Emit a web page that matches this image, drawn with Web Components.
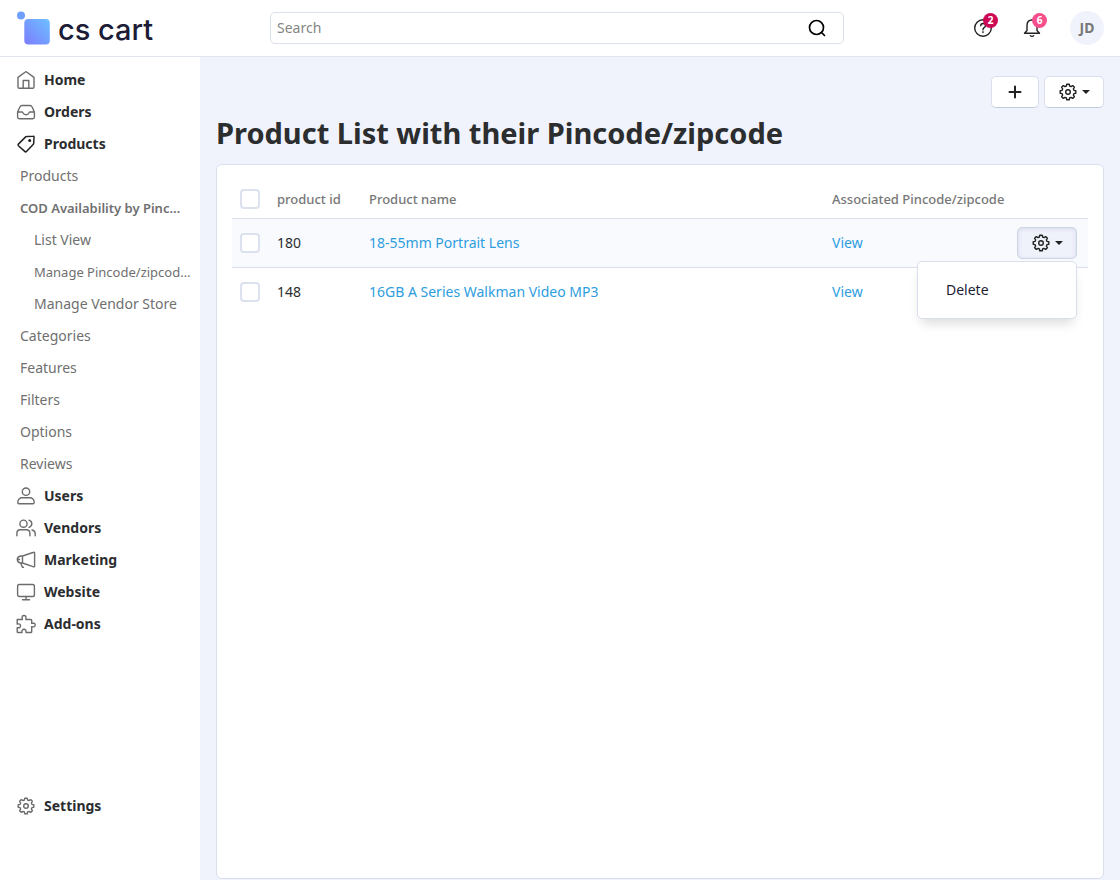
<!DOCTYPE html>
<html lang="en">
<head>
  <meta charset="utf-8">
  <meta name="viewport" content="width=device-width, initial-scale=1">
  <title>Product List with their Pincode/zipcode</title>
  <style>
    body {
      margin: 0;
      font-family: "Noto Sans", "Open Sans", sans-serif;
      font-size: 14px;
      line-height: 20px;
      color: #2b2d2f;
      --line: #d9dfec;
      --muted: #6f6f6f;
      --page: #f0f3fc;
      --link: #2d9de0;
    }
  </style>
</head>
<body>
  <admin-page>
    <admin-header slot="header" initials="JD">
      <counter-button icon="help" count="2" label="Help center" style="--badge: #cc0a54"></counter-button>
      <counter-button icon="bell" count="6" label="Notifications" style="--badge: #f6508c"></counter-button>
    </admin-header>
    <side-nav slot="nav">
      <nav-item icon="home">Home</nav-item>
      <nav-item icon="orders">Orders</nav-item>
      <nav-item icon="tag" active>Products</nav-item>
      <nav-item level="1">Products</nav-item>
      <nav-item level="1" active long>COD Availability by Pinc…</nav-item>
      <nav-item level="2">List View</nav-item>
      <nav-item level="2" long>Manage Pincode/zipcod…</nav-item>
      <nav-item level="2">Manage Vendor Store</nav-item>
      <nav-item level="1">Categories</nav-item>
      <nav-item level="1">Features</nav-item>
      <nav-item level="1">Filters</nav-item>
      <nav-item level="1">Options</nav-item>
      <nav-item level="1">Reviews</nav-item>
      <nav-item icon="user">Users</nav-item>
      <nav-item icon="users">Vendors</nav-item>
      <nav-item icon="megaphone">Marketing</nav-item>
      <nav-item icon="monitor">Website</nav-item>
      <nav-item icon="puzzle">Add-ons</nav-item>
      <nav-item slot="bottom" icon="gear">Settings</nav-item>
    </side-nav>
    <tool-button slot="actions" icon="plus" label="Add"></tool-button>
    <tool-button slot="actions" icon="gear" label="Tools" caret></tool-button>
    <span slot="title">Product List with their Pincode/zipcode</span>
    <product-table></product-table>
  </admin-page>

  <script>
    // outline of an eight-toothed cog centred in a 20x20 box
    function cogPath() {
      const points = [];
      for (let i = 0; i < 8; i++) {
        [[-15, 6.2], [-9, 7.9], [9, 7.9], [15, 6.2]].forEach(([offset, r]) => {
          const a = (i * 45 + offset) * Math.PI / 180;
          points.push((10 + r * Math.sin(a)).toFixed(2) + ' ' + (10 - r * Math.cos(a)).toFixed(2));
        });
      }
      return 'M' + points.join('L') + 'Z';
    }

    const ICONS = {
      home: '<path d="M2 7.4 9 2.200q1-.8 2 0l7 5.200V17q0 1.300-1.300 1.300H3.300Q2 18.300 2 17zM7.200 18.300V10.500h5.600v7.800"/>',
      orders: '<path d="M1.600 10 4 4.700Q4.500 3.500 6 3.500h8q1.500 0 2 1.200l2.400 5.300v5q0 1.700-1.700 1.700H3.300Q1.600 16.700 1.600 15zM1.600 10H6q.6 0 .9.700.8 2 3.100 2t3.100-2q.3-.7.9-.7h4.400"/>',
      tag: '<path d="M10.500 2.600 17 2.200q1-.1 1 1l-.3 6q0 .7-.6 1.200l-6.600 7q-.9.900-1.800 0L2.400 11.700q-.8-.8 0-1.600l7-7q.5-.5 1.100-.5z"/><circle cx="13.700" cy="6.500" r=".8" fill="currentColor"/>',
      user: '<circle cx="10" cy="5.700" r="3.700"/><path d="M5.200 11.700h9.600l2.300 1.500q1 .8 1 2.400v1.200q0 1-1 1H2.900q-1 0-1-1v-1.200q0-1.600 1-2.400z"/>',
      users: '<circle cx="7.500" cy="5.700" r="3.600"/><path d="M.9 17.700v-2.500q0-3.500 3.500-3.500h6q3.500 0 3.500 3.500v2.500M13 2.200q2.800 1 2.800 3.500T13 9.300M16 12q3.200.8 3.200 3.500v2.200"/>',
      megaphone: '<path d="M6.500 6 17 2.500q1.600-.6 1.600.6v13q0 1.200-1.600.6L6.500 13H4.600Q1.300 12.400 1.300 9.500T4.600 6zM6.500 6v7M4.600 13l1.600 3.700q.4 1 1.300.6M1.500 9.500h2"/>',
      monitor: '<rect x="1.600" y="2.500" width="16.800" height="12" rx="1.800"/><path d="M10 14.500v3.300M6.500 17.800h7"/>',
      puzzle: '<path d="M1.200 5.500h5.200Q5.300 1.500 8 1.500t1.800 4h5q.9 0 .9.900v3q3.500-.7 3.500 1.600t-3.500 1.700v5q0 .8-.8.800H10q.4-3.300-2-3.300t-2 3.300H2q-.8 0-.8-.8v-4q3.300.6 3.300-1.900T1.200 10z"/>',
      gear: '<path d="' + cogPath() + '"/><circle cx="10" cy="10" r="2.300"/>',
      help: '<circle cx="10" cy="10" r="8.300"/><path d="M7.700 7.800q0-2.300 2.400-2.300t2.300 2.200q0 1.200-1.300 2T10 11.800M10 13.800v.8"/>',
      bell: '<path d="M10 2q5 0 5 5.700v4.800l2.500 2.800h-15L5 12.500V7.700Q5 2 10 2zM8.300 17.800q1.700 1.200 3.400 0"/>',
      search: '<circle cx="9.500" cy="9.500" r="7"/><path d="m14.500 14.500 3 3"/>',
      plus: '<path d="M10 4.500v11M4.500 10h11"/>'
    };

    class UiIcon extends HTMLElement {
      connectedCallback() {
        if (this.shadowRoot) return;
        this.attachShadow({ mode: 'open' }).innerHTML = `
        <style>
          :host {
            display: block;
            flex: none;
            width: 20px;
            height: 20px;
          }
          svg {
            display: block;
            width: 100%;
            height: 100%;
            fill: none;
            stroke: currentColor;
            stroke-width: var(--stroke, 1.4);
            stroke-linejoin: round;
            stroke-linecap: round;
          }
        </style>
        <svg viewBox="0 0 20 20" aria-hidden="true">${ICONS[this.getAttribute('name')]}</svg>`;
      }
    }

    class AdminPage extends HTMLElement {
      constructor() {
        super();
        this.attachShadow({ mode: 'open' }).innerHTML = `
        <style>
          :host {
            display: flex;
            flex-direction: column;
            min-height: 100vh;
            background: var(--page);
          }
          .body {
            display: flex;
            flex: 1;
          }
          main {
            display: flex;
            flex: 1;
            flex-direction: column;
            min-width: 0;
            padding: 19px 16px 1px;
          }
          .actions {
            display: flex;
            justify-content: flex-end;
            gap: 5px;
          }
          h1 {
            margin: 7px 0 13px;
            font-size: 29px;
            line-height: 36px;
            font-weight: 700;
          }
          .panel {
            flex: 1;
            padding: 16px 15px;
            background: #fff;
            border: 1px solid var(--line);
            border-radius: 6px;
          }
        </style>
        <slot name="header"></slot>
        <div class="body">
          <slot name="nav"></slot>
          <main>
            <div class="actions"><slot name="actions"></slot></div>
            <h1><slot name="title"></slot></h1>
            <section class="panel"><slot></slot></section>
          </main>
        </div>`;
      }
    }

    class AdminHeader extends HTMLElement {
      connectedCallback() {
        if (this.shadowRoot) return;
        this.attachShadow({ mode: 'open' }).innerHTML = `
        <style>
          * { box-sizing: border-box; }
          :host {
            display: flex;
            align-items: center;
            height: 56px;
            padding: 0 16px;
            background: #fff;
            border-bottom: 1px solid #dfe4ef;
          }
          .brand {
            display: flex;
            flex: none;
            align-items: center;
            gap: 8px;
            width: 254px;
            color: #1c1c36;
            font: 500 29px/36px Inter, "Liberation Sans", sans-serif;
            text-decoration: none;
          }
          .brand svg {
            width: 34px;
            height: 34px;
          }
          .brand span { padding-top: 4px; }
          form {
            display: flex;
            flex: 0 1 574px;
            align-items: center;
            height: 32px;
            border: 1px solid var(--line);
            border-radius: 5px;
          }
          input {
            flex: 1;
            min-width: 0;
            padding: 0 6px;
            border: 0;
            background: none;
            font: inherit;
            outline: 0;
          }
          input::placeholder { color: #858585; opacity: 1; }
          form button {
            padding: 0 16px;
            border: 0;
            background: none;
            color: #000;
            --stroke: 1.7;
          }
          .tools {
            display: flex;
            align-items: center;
            gap: 27px;
            margin-left: auto;
          }
          .avatar {
            width: 34px;
            height: 34px;
            padding: 0;
            border: 0;
            border-radius: 50%;
            background: var(--page);
            color: #777;
            font: inherit;
            font-weight: 700;
          }
        </style>
        <a class="brand" href="#">
          <svg viewBox="0 0 34 34" aria-hidden="true">
            <defs>
              <linearGradient id="tile" x1="0" y1="1" x2="1" y2="0">
                <stop offset="0" stop-color="#7c7cff"/>
                <stop offset="1" stop-color="#6dc0ff"/>
              </linearGradient>
            </defs>
            <circle cx="5" cy="4.500" r="4" fill="#6f9fff"/>
            <rect x="8.300" y="8" width="25.500" height="25.500" rx="4" fill="url(#tile)"/>
          </svg>
          <span>cs cart</span>
        </a>
        <form>
          <input type="text" placeholder="Search" aria-label="Search">
          <button type="button" aria-label="Find"><ui-icon name="search"></ui-icon></button>
        </form>
        <div class="tools">
          <slot></slot>
          <button class="avatar" type="button">${this.getAttribute('initials')}</button>
        </div>`;
      }
    }

    class CounterButton extends HTMLElement {
      connectedCallback() {
        if (this.shadowRoot) return;
        this.attachShadow({ mode: 'open' }).innerHTML = `
        <style>
          :host { display: block; }
          button {
            position: relative;
            display: block;
            padding: 0 1px;
            border: 0;
            background: none;
            color: #222;
            font: inherit;
          }
          .count {
            position: absolute;
            top: -5px;
            right: -4px;
            width: 15px;
            height: 15px;
            border-radius: 50%;
            background: var(--badge);
            color: #fff;
            font-size: 10px;
            line-height: 15px;
            font-weight: 700;
            text-align: center;
          }
        </style>
        <button type="button" aria-label="${this.getAttribute('label')}">
          <ui-icon name="${this.getAttribute('icon')}"></ui-icon>
          <span class="count">${this.getAttribute('count')}</span>
        </button>`;
      }
    }

    class SideNav extends HTMLElement {
      constructor() {
        super();
        this.attachShadow({ mode: 'open' }).innerHTML = `
        <style>
          :host {
            display: flex;
            flex: none;
            width: 200px;
            background: #fff;
          }
          nav {
            display: flex;
            flex: 1;
            flex-direction: column;
            min-width: 0;
            padding: 7px 0 58px;
          }
          .bottom { margin-top: auto; }
        </style>
        <nav>
          <slot></slot>
          <div class="bottom"><slot name="bottom"></slot></div>
        </nav>`;
      }
    }

    class NavItem extends HTMLElement {
      connectedCallback() {
        if (this.shadowRoot) return;
        const icon = this.getAttribute('icon');
        this.attachShadow({ mode: 'open' }).innerHTML = `
        <style>
          :host { display: block; }
          a {
            display: flex;
            align-items: center;
            gap: 8px;
            height: 32px;
            padding-left: 16px;
            color: #2b2d2f;
            font-weight: 700;
            text-decoration: none;
            white-space: nowrap;
          }
          ui-icon { color: #6c6c6c; }
          :host([active]) ui-icon { color: #222; --stroke: 1.5; }
          :host([level]) a { color: var(--muted); font-weight: 400; }
          :host([level="1"]) a { padding-left: 20px; }
          :host([level="2"]) a { padding-left: 34px; }
          :host([level][active]) a { font-weight: 600; }
          :host([long]) a { font-size: 13px; }
        </style>
        <a href="#">${icon ? `<ui-icon name="${icon}"></ui-icon>` : ''}<slot></slot></a>`;
      }
    }

    class ToolButton extends HTMLElement {
      connectedCallback() {
        if (this.shadowRoot) return;
        const caret = this.hasAttribute('caret');
        this.attachShadow({ mode: 'open' }).innerHTML = `
        <style>
          :host { display: block; }
          button {
            display: flex;
            align-items: center;
            justify-content: center;
            box-sizing: border-box;
            gap: 4px;
            width: ${caret ? 60 : 48}px;
            height: 32px;
            padding: 0;
            border: 1px solid var(--line);
            border-bottom-color: #c3cbdd;
            border-radius: 5px;
            background: #fff;
            color: #222;
          }
          :host([icon="plus"]) { --stroke: 2; }
          :host([open]) button {
            background: #eff2fb;
            border-color: #cdd4e4;
            box-shadow: inset 0 1px 4px rgba(80, 90, 130, 0.15);
          }
          .caret {
            border: 4px solid transparent;
            border-top-color: currentColor;
            border-bottom: 0;
          }
        </style>
        <button type="button" aria-label="${this.getAttribute('label')}">
          <ui-icon name="${this.getAttribute('icon')}"></ui-icon>
          ${caret ? '<span class="caret"></span>' : ''}
        </button>`;
      }
    }

    class RowMenu extends HTMLElement {
      constructor() {
        super();
        this.attachShadow({ mode: 'open' }).innerHTML = `
        <style>
          :host {
            position: relative;
            display: block;
            width: 60px;
          }
          .menu {
            position: absolute;
            top: calc(100% + 2px);
            right: 0;
            z-index: 1;
            box-sizing: border-box;
            width: 160px;
            padding: 12px 0;
            background: #fff;
            border: 1px solid var(--line);
            border-radius: 5px;
            box-shadow: 0 8px 12px -4px rgba(0, 0, 0, 0.15);
          }
          a {
            display: block;
            padding: 6px 28px;
            color: #1c1c36;
            text-decoration: none;
          }
        </style>
        <tool-button icon="gear" label="Row tools" caret open></tool-button>
        <div class="menu"><a href="#"><slot></slot></a></div>`;
      }
    }

    const PRODUCTS = [
      { id: 180, name: '18-55mm Portrait Lens', menu: true },
      { id: 148, name: '16GB A Series Walkman Video MP3' }
    ];

    class ProductTable extends HTMLElement {
      constructor() {
        super();
        this.attachShadow({ mode: 'open' }).innerHTML = `
        <style>
          :host { display: block; }
          table {
            width: 100%;
            border-collapse: separate;
            border-spacing: 0;
            table-layout: fixed;
          }
          .check { width: 37px; }
          .id { width: 92px; }
          .codes { width: 185px; }
          .tools { width: 79px; }
          th, td {
            box-sizing: border-box;
            padding: 0 8px;
            text-align: left;
            white-space: nowrap;
          }
          th {
            height: 38px;
            padding-bottom: 1px;
            color: #777;
            font-size: 13px;
            font-weight: 500;
            border-bottom: 1px solid var(--line);
          }
          td { height: 48px; }
          tbody tr:not(:last-child) td {
            height: 49px;
            border-bottom: 1px solid var(--line);
          }
          tr.current td { background: #f8fafd; }
          a { color: var(--link); text-decoration: none; }
          input {
            display: block;
            appearance: none;
            box-sizing: border-box;
            width: 20px;
            height: 20px;
            margin: 0;
            border: 2px solid #dbe1ee;
            border-radius: 4px;
            background: #fff;
          }
        </style>
        <table>
          <colgroup><col class="check"><col class="id"><col><col class="codes"><col class="tools"></colgroup>
          <thead>
            <tr>
              <th><input type="checkbox" aria-label="Select all"></th>
              <th>product id</th>
              <th>Product name</th>
              <th>Associated Pincode/zipcode</th>
              <th></th>
            </tr>
          </thead>
          <tbody>
            ${PRODUCTS.map((p) => `
            <tr class="${p.menu ? 'current' : ''}">
              <td><input type="checkbox" aria-label="Select product ${p.id}"></td>
              <td>${p.id}</td>
              <td><a href="#">${p.name}</a></td>
              <td><a href="#">View</a></td>
              <td>${p.menu ? '<row-menu>Delete</row-menu>' : ''}</td>
            </tr>`).join('')}
          </tbody>
        </table>`;
      }
    }

    customElements.define('ui-icon', UiIcon);
    customElements.define('admin-page', AdminPage);
    customElements.define('admin-header', AdminHeader);
    customElements.define('counter-button', CounterButton);
    customElements.define('side-nav', SideNav);
    customElements.define('nav-item', NavItem);
    customElements.define('tool-button', ToolButton);
    customElements.define('row-menu', RowMenu);
    customElements.define('product-table', ProductTable);
  </script>
</body>
</html>
